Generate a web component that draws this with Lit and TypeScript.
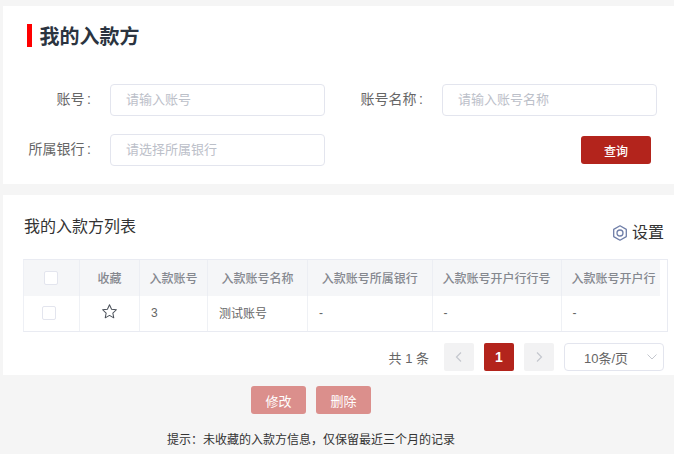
import { LitElement, html, css, svg } from "lit";
import { customElement } from "lit/decorators.js";

const star = svg`<path d="M8 1.6l1.95 4.2 4.55.55-3.35 3.1.88 4.5L8 11.7l-4.03 2.25.88-4.5L1.5 6.35l4.55-.55z" fill="none" stroke="#4a5059" stroke-width="0.95" stroke-linejoin="round"/>`;

@customElement("app-root")
export class AppRoot extends LitElement {
  static styles = css`
    :host {
      display: block;
      width: 674px;
      height: 454px;
      overflow: hidden;
      background: #f5f5f5;
      font-family: "Liberation Sans", "Noto Sans CJK SC", sans-serif;
      color: #333;
      box-sizing: border-box;
      padding-top: 6px;
    }
    .panel { margin-left: 3px; background: #fff; }
    .search { height: 178px; box-sizing: border-box; padding-top: 18px; }
    .title {
      margin: 0 0 37px 24px;
      height: 23px;
      display: flex;
      align-items: center;
      gap: 8px;
      font-size: 20px;
      line-height: 23px;
      font-weight: 700;
      color: #2b3440;
    }
    .title::before { content: ""; width: 4.5px; height: 23px; background: #ff0000; }
    .title span { margin-top: 4px; }
    .form {
      display: grid;
      grid-template-columns: 107px 215px 117px 215px;
      grid-auto-rows: 32px;
      row-gap: 18px;
      align-items: center;
    }
    .label { text-align: right; padding: 0 19px 4px 0; font-size: 14px; color: #666; white-space: nowrap; }
    .colon { margin-left: 2.5px; }
    .input {
      height: 32px;
      box-sizing: border-box;
      border: 1px solid #e3e5ee;
      border-radius: 4px;
      padding-left: 15px;
      font-size: 13px;
      line-height: 30px;
      color: #bcc0c9;
    }
    .query-cell { grid-column: 3 / 5; display: flex; justify-content: flex-end; padding-right: 6px; }
    .btn {
      border-radius: 3px;
      color: #fff;
      display: flex;
      align-items: center;
      justify-content: center;
      box-sizing: border-box;
    }
    .query { width: 70px; height: 28px; background: #b3241c; font-size: 12px; font-weight: 500; }
    .list { margin-top: 11px; height: 180px; box-sizing: border-box; padding: 20px 6px 0 21px; }
    .list-head {
      display: flex;
      justify-content: space-between;
      height: 44px;
      margin-left: -1px;
      font-size: 16px;
      color: #333;
    }
    .list-head .name { padding-left: 1px; line-height: 23px; }
    .setting { display: flex; align-items: flex-start; gap: 4px; padding-top: 6px; margin-right: 4px; line-height: 23px; }
    .setting svg { margin-top: 4px; }
    .table { width: 645px; margin-left: -1px; box-sizing: border-box; border: 1px solid #e9ebf2; border-left-color: #eef0f5; }
    .row { display: grid; grid-template-columns: 55px 60px 68px 100px 124.5px 129px 99px; }
    .body-row { grid-template-columns: 55px 60px 68px 100px 124.5px 129px 106.5px; }
    .th {
      height: 36px;
      background: #f5f6f8;
      border-left: 1px solid #eceef3;
      box-sizing: border-box;
      display: flex;
      align-items: center;
      justify-content: center;
      padding-bottom: 2px;
      font-size: 12px;
      font-weight: 500;
      color: #85888f;
      white-space: nowrap;
    }
    .th.last { justify-content: flex-start; padding-left: 10px; }
    .th:first-child, .td:first-child { border-left: 0; }
    .th:first-child { padding-bottom: 0; padding-right: 1px; }
    .td {
      height: 35px;
      border-left: 1px solid #eff1f5;
      box-sizing: border-box;
      display: flex;
      align-items: center;
      padding: 0 0 2px 11px;
      font-size: 12px;
      color: #666;
    }
    .td.center { justify-content: center; padding-left: 0; }
    .td:first-child { padding-right: 5px; }
    .td .star { margin-bottom: 2px; }
    .check { width: 14px; height: 14px; border: 1px solid #e3e5ee; border-radius: 2px; background: #fff; box-sizing: border-box; }
    .pager {
      display: flex;
      align-items: center;
      justify-content: flex-end;
      gap: 10px;
      margin-top: 11px;
      height: 28px;
      margin-right: 4px;
      font-size: 13px;
      color: #666;
    }
    .total { margin-right: 5px; }
    .page {
      width: 30px;
      height: 28px;
      border-radius: 2px;
      background: #f2f2f3;
      display: flex;
      align-items: center;
      justify-content: center;
    }
    .page.active { background: #b3241c; color: #fff; font-weight: 700; font-size: 14px; }
    .select {
      width: 100px;
      height: 28px;
      box-sizing: border-box;
      border: 1px solid #e3e5ee;
      border-radius: 4px;
      display: flex;
      align-items: center;
      justify-content: space-between;
      padding: 0 4px 0 19px;
      color: #666;
    }
    .footer { padding-right: 52px; text-align: center; }
    .actions { display: flex; justify-content: center; gap: 10px; margin-top: 11px; }
    .del { width: 55px; height: 28px; background: #db8f8c; font-size: 13px; }
    .hint { margin-top: 17px; font-size: 12px; line-height: 18px; color: #333; }
  `;

  render() {
    const heads = ["收藏", "入款账号", "入款账号名称", "入款账号所属银行", "入款账号开户行行号"];
    return html`
      <section class="panel search">
        <h1 class="title"><span>我的入款方</span></h1>
        <div class="form">
          <div class="label">账号<span class="colon">:</span></div>
          <div class="input">请输入账号</div>
          <div class="label">账号名称<span class="colon">:</span></div>
          <div class="input">请输入账号名称</div>
          <div class="label">所属银行<span class="colon">:</span></div>
          <div class="input">请选择所属银行</div>
          <div class="query-cell"><div class="btn query">查询</div></div>
        </div>
      </section>
      <section class="panel list">
        <div class="list-head">
          <div class="name">我的入款方列表</div>
          <div class="setting">
            <svg width="16" height="16" viewBox="0 0 16 16" fill="none" stroke="#6f7ea8" stroke-width="1.3">
              <path d="M8 .8l6.3 3.6v7.2L8 15.2l-6.3-3.6V4.400z" stroke-linejoin="round"/>
              <circle cx="8" cy="8" r="3"/>
            </svg>
            <span>设置</span>
          </div>
        </div>
        <div class="table">
          <div class="row">
            <div class="th"><span class="check"></span></div>
            ${heads.map((h) => html`<div class="th">${h}</div>`)}
            <div class="th last">入款账号开户行</div>
          </div>
          <div class="row body-row">
            <div class="td center"><span class="check"></span></div>
            <div class="td center"><svg class="star" width="17" height="17" viewBox="0 0 16 16">${star}</svg></div>
            <div class="td">3</div>
            <div class="td">测试账号</div>
            <div class="td">-</div>
            <div class="td">-</div>
            <div class="td">-</div>
          </div>
        </div>
        <div class="pager">
          <span class="total">共 1 条</span>
          <span class="page"><svg width="10" height="12" viewBox="0 0 10 12" fill="none" stroke="#c4c7ce" stroke-width="1.2"><path d="M7 1.5L2.5 6 7 10.5"/></svg></span>
          <span class="page active">1</span>
          <span class="page"><svg width="10" height="12" viewBox="0 0 10 12" fill="none" stroke="#c4c7ce" stroke-width="1.2"><path d="M3 1.5L7.5 6 3 10.500"/></svg></span>
          <span class="select">10条/页<svg width="14" height="10" viewBox="0 0 14 10" fill="none" stroke="#c4c7ce" stroke-width="1"><path d="M2.5 2.5L7 7l4.500-4.500"/></svg></span>
        </div>
      </section>
      <div class="footer">
        <div class="actions"><div class="btn del">修改</div><div class="btn del">删除</div></div>
        <div class="hint">提示&#xFF1A;未收藏的入款方信息&#xFF0C;仅保留最近三个月的记录</div>
      </div>
    `;
  }
}
